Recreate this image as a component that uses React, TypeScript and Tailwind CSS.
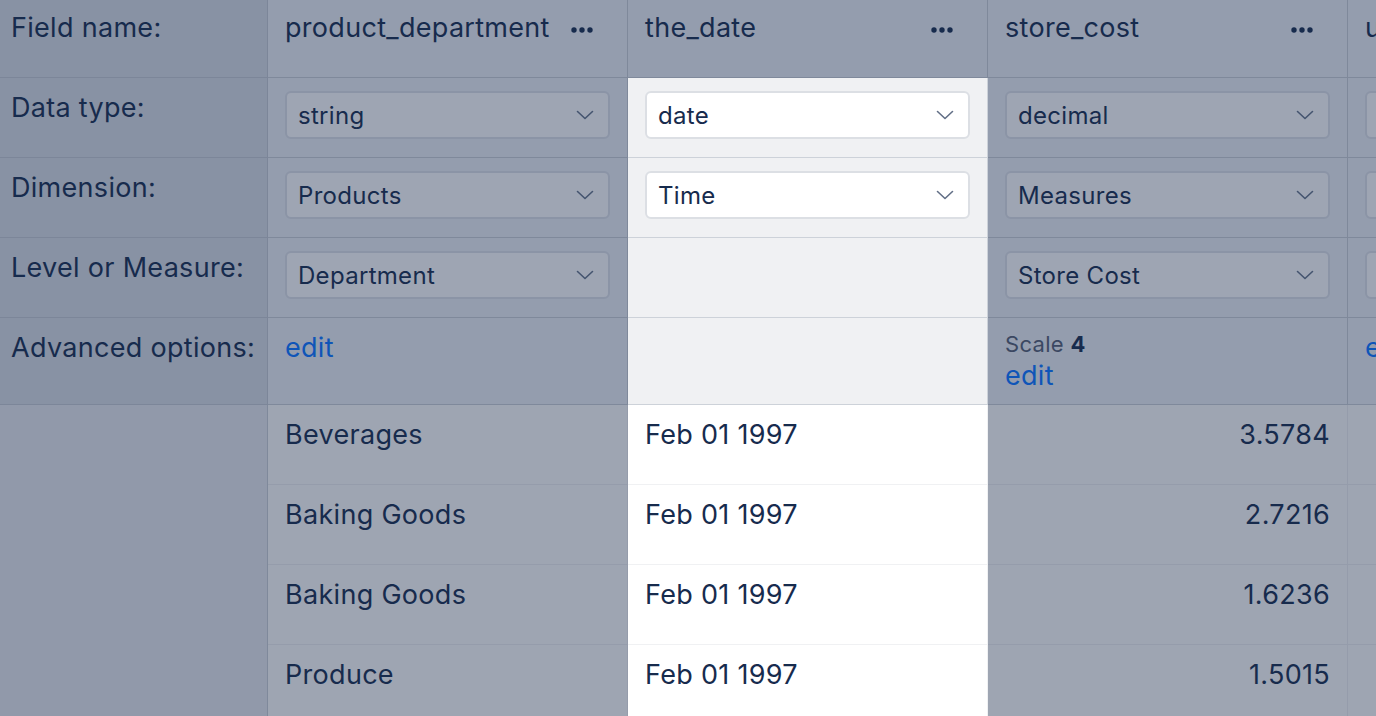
import { ReactNode } from "react";

type Col = {
  name: string;
  type: string;
  dimension: string;
  level: string;
  scale?: number;
  edit: boolean;
  active?: boolean;
  align?: "left" | "right";
  values: string[];
};

const columns: Col[] = [
  {
    name: "product_department",
    type: "string",
    dimension: "Products",
    level: "Department",
    edit: true,
    values: ["Beverages", "Baking Goods", "Baking Goods", "Produce"],
  },
  {
    name: "the_date",
    type: "date",
    dimension: "Time",
    level: "",
    edit: false,
    active: true,
    values: ["Feb 01 1997", "Feb 01 1997", "Feb 01 1997", "Feb 01 1997"],
  },
  {
    name: "store_cost",
    type: "decimal",
    dimension: "Measures",
    level: "Store Cost",
    scale: 4,
    edit: true,
    align: "right",
    values: ["3.5784", "2.7216", "1.6236", "1.5015"],
  },
  {
    name: "unit_sales",
    type: "integer",
    dimension: "Measures",
    level: "Unit Sales",
    edit: true,
    align: "right",
    values: ["2", "3", "1", "4"],
  },
];

function Dots() {
  return (
    <svg width="22" height="6" viewBox="0 0 22 6" className="shrink-0 mr-[34px] mt-[4px]">
      <circle cx="3" cy="3" r="2.7" fill="#172b4d" />
      <circle cx="11" cy="3" r="2.7" fill="#172b4d" />
      <circle cx="19" cy="3" r="2.7" fill="#172b4d" />
    </svg>
  );
}

function Chevron({ active }: { active?: boolean }) {
  return (
    <svg width="18" height="10" viewBox="0 0 18 10" fill="none" className="shrink-0">
      <path
        d="M1.5 1.5 L9 8.5 L16.5 1.5"
        stroke={active ? "#626f86" : "#44546f"}
        strokeWidth="1.6"
        strokeLinecap="round"
        strokeLinejoin="round"
      />
    </svg>
  );
}

function Select({ value, active }: { value: string; active?: boolean }) {
  return (
    <div
      className={
        "h-12 w-full rounded-md border-2 flex items-center justify-between pl-[11px] pr-[14px] text-[24px] tracking-[0.3px] " +
        (active ? "bg-white border-[#dcdfe4]" : "bg-[#9ea5b3] border-[#8b94a6]")
      }
    >
      <span className="mt-[2px]">{value}</span>
      <Chevron active={active} />
    </div>
  );
}

function Label({ children, last }: { children: ReactNode; last?: boolean }) {
  return (
    <div
      className={
        "bg-[#8892a4] border-r border-b border-[#7c8699] pl-[11px] pt-3 leading-9 whitespace-nowrap " +
        (last ? "h-[87px]" : "h-20")
      }
    >
      {children}
    </div>
  );
}

function HeadCell({ col, children, last }: { col: Col; children?: ReactNode; last?: boolean }) {
  return (
    <div
      className={
        "border-r border-b px-[17px] " +
        (last ? "h-[87px] pt-3 " : "h-20 pt-[13px] ") +
        (col.active ? "bg-[#f0f1f3] border-[#cdd2d9]" : "bg-[#949dae] border-[#7f899b]")
      }
    >
      {children}
    </div>
  );
}

export default function App() {
  return (
    <div
      className="w-[1376px] h-[716px] overflow-hidden bg-[#9ea5b2] text-[#172b4d] text-[27px] tracking-[0.3px]"
      style={{ fontFamily: "Inter, 'Noto Sans', sans-serif" }}
    >
      <div className="grid grid-cols-[268px_360px_360px_360px_360px]">
        {/* field names */}
        <div className="bg-[#8892a4] border-r border-b border-[#7c8699] pl-[11px] pt-[10px] leading-9 h-[78px]">
          Field name:
        </div>
        {columns.map((c) => (
          <div
            key={c.name}
            className="bg-[#949dae] border-r border-b border-[#7f899b] h-[78px] pl-[17px] pt-[10px] leading-9 flex items-start justify-between"
          >
            <span>{c.name}</span>
            <span className="h-9 flex items-center">
              <Dots />
            </span>
          </div>
        ))}

        {/* data type */}
        <Label>Data type:</Label>
        {columns.map((c) => (
          <HeadCell key={c.name} col={c}>
            <Select value={c.type} active={c.active} />
          </HeadCell>
        ))}

        {/* dimension */}
        <Label>Dimension:</Label>
        {columns.map((c) => (
          <HeadCell key={c.name} col={c}>
            <Select value={c.dimension} active={c.active} />
          </HeadCell>
        ))}

        {/* level / measure */}
        <Label>Level or Measure:</Label>
        {columns.map((c) => (
          <HeadCell key={c.name} col={c}>
            {c.level && <Select value={c.level} active={c.active} />}
          </HeadCell>
        ))}

        {/* advanced options */}
        <Label last>Advanced options:</Label>
        {columns.map((c) => (
          <HeadCell key={c.name} col={c} last>
            {c.scale !== undefined && (
              <div className="text-[22px] leading-7 text-[#3b4862]">
                Scale <b className="text-[#172b4d]">{c.scale}</b>
              </div>
            )}
            {c.edit && <div className="leading-9 text-[#0f55b8]">edit</div>}
          </HeadCell>
        ))}

        {/* rows */}
        {[0, 1, 2, 3].map((r) => (
          <div key={r} className="contents">
            <div className="bg-[#9199aa] border-r border-[#7f899b] h-20" />
            {columns.map((c) => (
              <div
                key={c.name}
                className={
                  "h-20 border-r border-b px-[17px] pt-3 leading-9 " +
                  (c.align === "right" ? "text-right " : "") +
                  (c.active ? "bg-white border-[#f0f1f3]" : "bg-[#9ea5b2] border-[#959cab]")
                }
              >
                {c.values[r]}
              </div>
            ))}
          </div>
        ))}
      </div>
    </div>
  );
}
